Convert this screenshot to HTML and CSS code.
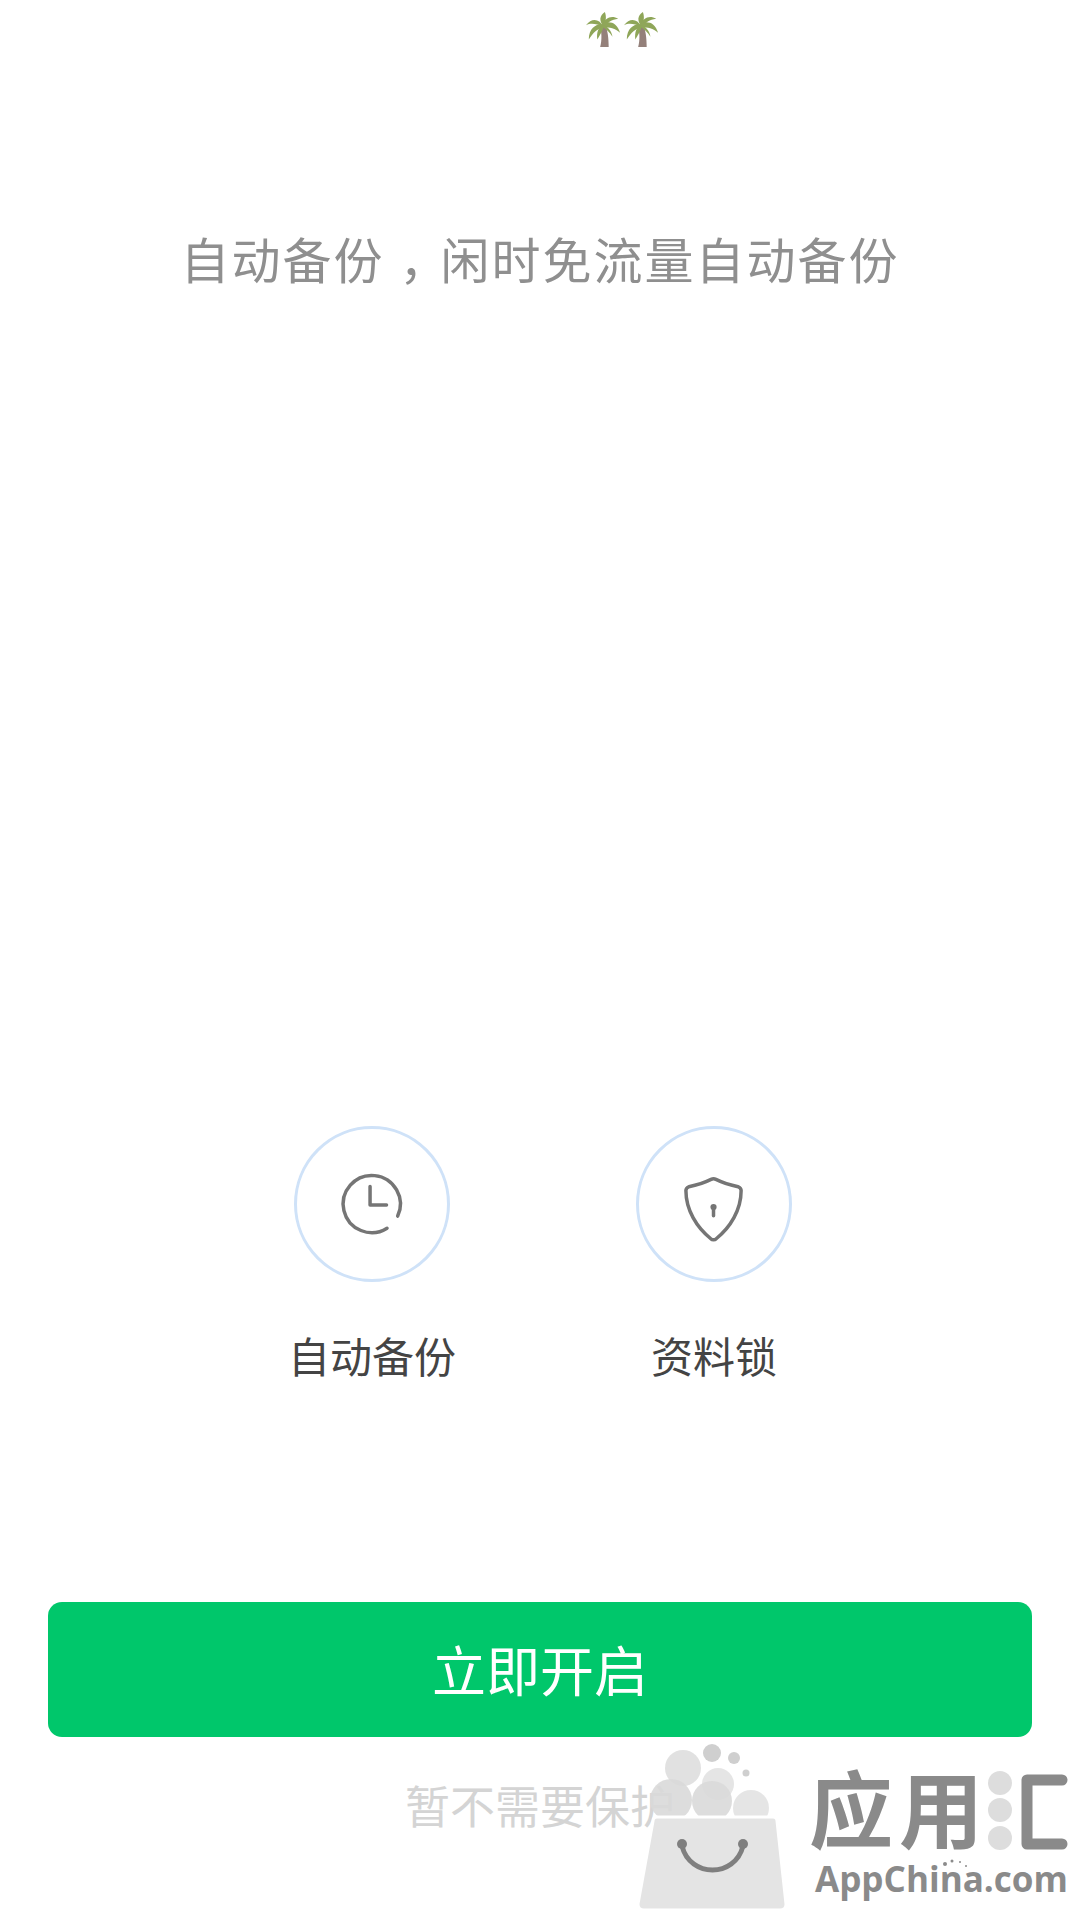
FILE: index.html
```html
<!DOCTYPE html>
<html lang="zh-CN">
<head>
<meta charset="utf-8">
<title>自动备份</title>
<link rel="stylesheet" href="styles.css">
</head>
<body>
<main class="page">
  <div class="palms">
    <svg class="palm" viewBox="0 0 36 38" aria-hidden="true">
      <path class="trunk" d="M14 14C17 20 17 30 15 37H24C24 28 23 19 20 13Z"/>
      <path class="leaf" d="M18 15C14 7 6 6 0 14C6 11 11 13 18 15Z"/>
      <path class="leaf" d="M18 13C12 12 3 16 3 29C8 21 12 18 18 16Z"/>
      <path class="leaf" d="M18 15C14 9 14 4 20 0C22 6 21 10 18 15Z"/>
      <path class="leaf" d="M17 14C20 6 27 3 34 7C27 8 23 11 18 16Z"/>
      <path class="leaf" d="M18 12C25 9 33 11 36 22C31 17 25 16 18 16Z"/>
      <path class="leaf" d="M18 14C13 16 11 22 12 29C15 24 18 19 19 15Z"/>
      <path class="leaf" d="M18 14C23 15 27 20 28 26C25 21 21 18 17 15Z"/>
    </svg>
    <svg class="palm" viewBox="0 0 36 38" aria-hidden="true">
      <path class="trunk" d="M14 14C17 20 17 30 15 37H24C24 28 23 19 20 13Z"/>
      <path class="leaf" d="M18 15C14 7 6 6 0 14C6 11 11 13 18 15Z"/>
      <path class="leaf" d="M18 13C12 12 3 16 3 29C8 21 12 18 18 16Z"/>
      <path class="leaf" d="M18 15C14 9 14 4 20 0C22 6 21 10 18 15Z"/>
      <path class="leaf" d="M17 14C20 6 27 3 34 7C27 8 23 11 18 16Z"/>
      <path class="leaf" d="M18 12C25 9 33 11 36 22C31 17 25 16 18 16Z"/>
      <path class="leaf" d="M18 14C13 16 11 22 12 29C15 24 18 19 19 15Z"/>
      <path class="leaf" d="M18 14C23 15 27 20 28 26C25 21 21 18 17 15Z"/>
    </svg>
  </div>

  <h1 class="title">自动备份<span class="comma">，</span>闲时免流量自动备份</h1>

  <section class="features">
    <div class="feature">
      <div class="ring">
        <svg class="icon" viewBox="0 0 64 64" aria-hidden="true">
          <path d="M58.5 44.5A29.5 29.5 0 1 0 47.500 57"/>
          <path d="M30 14V33H47"/>
        </svg>
      </div>
      <div class="label">自动备份</div>
    </div>
    <div class="feature">
      <div class="ring">
        <svg class="icon icon-shield" viewBox="0 0 64 64" aria-hidden="true">
          <path d="M29 2.500C22 6 14 8.500 6 10C4 11 3 12 3 14C3 34 14 52 29 64C30 65 33 65 34 64C49 52 60 34 60 14C60 12 59 11 57 10C49 8.500 41 6 34 2.500C32 1.500 31 1.500 29 2.500Z"/>
          <circle class="keyhole" cx="31.500" cy="31" r="3.200"/>
          <path d="M31.500 31V40"/>
        </svg>
      </div>
      <div class="label">资料锁</div>
    </div>
  </section>

  <button class="cta" type="button">立即开启</button>
  <div class="skip">暂不需要保护</div>

  <svg class="watermark" viewBox="0 0 460 200" aria-label="应用汇 AppChina.com">
    <circle class="ball-a" cx="63" cy="48" r="18"/>
    <circle class="ball-b" cx="92" cy="33" r="9"/>
    <circle class="ball-b" cx="114" cy="38" r="6"/>
    <circle class="ball-b" cx="126" cy="53" r="3.500"/>
    <circle class="ball-d" cx="98" cy="64" r="16"/>
    <circle class="ball-c" cx="51" cy="80" r="21"/>
    <circle class="ball-c" cx="92" cy="81" r="20"/>
    <circle class="ball-d" cx="131" cy="88" r="18"/>
    <path class="bag" d="M37 97H153C156 97 157 99 157 101L166 184C166 188 164 190 160 190H24C20 190 18 188 18 184L33 101C33 99 34 97 37 97Z"/>
    <path class="smile" d="M62 126C70 158 115 158 123 126"/>
    <circle class="smile-dot" cx="62" cy="124" r="5"/>
    <circle class="smile-dot" cx="123" cy="124" r="5"/>
    <text class="wm-cn" x="189" y="122">应</text>
    <text class="wm-cn" x="279" y="122">用</text>
    <circle class="ball-c" cx="380" cy="63" r="12"/>
    <circle class="ball-c" cx="380" cy="90" r="12"/>
    <circle class="ball-c" cx="380" cy="118" r="12"/>
    <path class="wm-bracket" d="M442 60H407V124H442"/>
    <text class="wm-en" x="195" y="172" textLength="253" lengthAdjust="spacingAndGlyphs">AppChina.com</text>
    <circle class="smile-dot-s" cx="325" cy="144" r="2"/>
    <circle class="smile-dot-s" cx="332" cy="141" r="1.500"/>
    <circle class="smile-dot-s" cx="340" cy="142" r="1"/>
    <circle class="smile-dot-s" cx="346" cy="146" r="1"/>
  </svg>
</main>
</body>
</html>
```

FILE: styles.css
```css
* { box-sizing: border-box; }

html, body {
  margin: 0;
  padding: 0;
  background: #fff;
}

.page {
  position: relative;
  width: 1080px;
  height: 1920px;
  overflow: hidden;
  display: flex;
  flex-direction: column;
  align-items: center;
  font-family: "Noto Sans CJK SC", "Liberation Sans", sans-serif;
}

.palms {
  display: flex;
  gap: 2px;
  margin: 12px 0 0 163px;
  height: 36px;
}

.palm {
  width: 36px;
  height: 36px;
}

.trunk { fill: #94807a; }
.leaf { fill: #8fa659; }

.title {
  margin: 175px 0 0;
  font-size: 49px;
  font-weight: 400;
  line-height: 70px;
  letter-spacing: 2px;
  color: #8f8f8f;
}

.comma {
  display: inline-block;
  width: 56px;
  text-align: center;
  font-feature-settings: "halt";
}

.features {
  margin: 833px 0 0 6px;
  display: grid;
  grid-template-columns: 342px 342px;
}

.feature {
  display: flex;
  flex-direction: column;
  align-items: center;
}

.ring {
  width: 156px;
  height: 156px;
  border: 3px solid #cfe2f8;
  border-radius: 50%;
  display: flex;
  align-items: center;
  justify-content: center;
}

.icon {
  width: 62px;
  height: 62px;
  overflow: visible;
  fill: none;
  stroke: #757575;
  stroke-width: 3.600;
  stroke-linecap: round;
  stroke-linejoin: round;
}

.icon-shield {
  margin-top: 8px;
}

.keyhole {
  fill: #757575;
  stroke: none;
}

.label {
  margin-top: 45px;
  font-size: 42px;
  line-height: 56px;
  color: #444;
}

.cta {
  margin-top: 219px;
  width: 984px;
  height: 135px;
  border: 0;
  border-radius: 14px;
  background: #00c76b;
  color: #fff;
  font-family: inherit;
  font-size: 54px;
  line-height: 1;
  padding: 0 0 1px;
}

.skip {
  margin-top: 36px;
  font-size: 45px;
  line-height: 64px;
  color: #d4d4d4;
}

.watermark {
  position: absolute;
  left: 620px;
  top: 1720px;
  width: 460px;
  height: 200px;
}

.ball-a { fill: #dedede; opacity: .9; }
.ball-b { fill: #cfcfcf; }
.ball-c { fill: #d9d9d9; opacity: .9; }
.ball-d { fill: #e2e2e2; opacity: .9; }

.bag {
  fill: #e4e4e4;
  stroke: #fff;
  stroke-width: 3;
}

.smile {
  fill: none;
  stroke: #7f7f7f;
  stroke-width: 5;
  stroke-linecap: round;
}

.smile-dot { fill: #7f7f7f; }
.smile-dot-s { fill: #8b8b8b; }

.wm-cn {
  font-family: "Noto Sans CJK SC", sans-serif;
  font-size: 84px;
  font-weight: 700;
  fill: #8a8a8a;
}

.wm-bracket {
  fill: none;
  stroke: #8a8a8a;
  stroke-width: 11;
  stroke-linecap: round;
  stroke-linejoin: round;
}

.wm-en {
  font-family: "Open Sans", sans-serif;
  font-size: 36px;
  font-weight: 700;
  fill: #8a8a8a;
}
```
